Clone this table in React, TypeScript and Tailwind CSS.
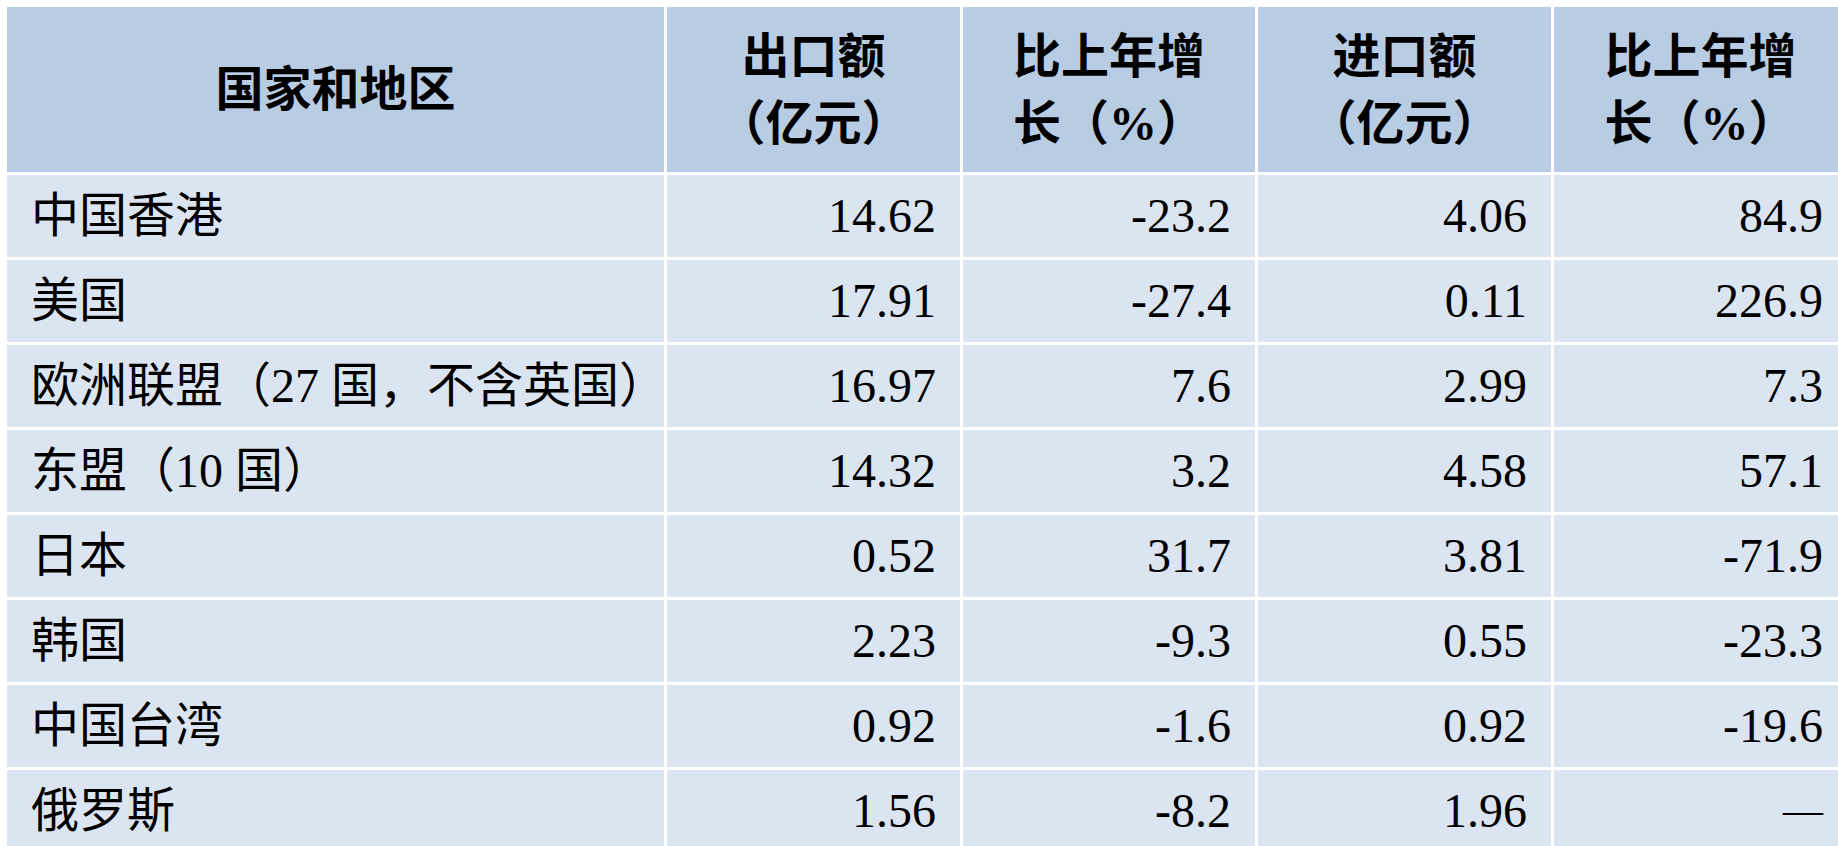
const rows: [string, string, string, string, string][] = [
  ["中国香港", "14.62", "-23.2", "4.06", "84.9"],
  ["美国", "17.91", "-27.4", "0.11", "226.9"],
  ["欧洲联盟（27 国，不含英国）", "16.97", "7.6", "2.99", "7.3"],
  ["东盟（10 国）", "14.32", "3.2", "4.58", "57.1"],
  ["日本", "0.52", "31.7", "3.81", "-71.9"],
  ["韩国", "2.23", "-9.3", "0.55", "-23.3"],
  ["中国台湾", "0.92", "-1.6", "0.92", "-19.6"],
  ["俄罗斯", "1.56", "-8.2", "1.96", "—"],
];

const font = "font-['Liberation_Serif','Noto_Sans_CJK_SC',serif]";
const head = "bg-[#b8cce4] text-center align-middle font-bold leading-[67px] p-0";

export default function App() {
  return (
    <div className="w-[1838px] h-[846px] overflow-hidden bg-white p-[4px]">
      <table className={`${font} border-separate border-spacing-[3px] text-[48px] text-black w-max`}>
        <thead>
          <tr className="h-[165px]">
            <th className={`${head} w-[657px]`}>国家和地区</th>
            <th className={`${head} w-[293px]`}>
              出口额
              <br />
              （亿元）
            </th>
            <th className={`${head} w-[292px]`}>
              比上年增
              <br />
              长（%）
            </th>
            <th className={`${head} w-[293px]`}>
              进口额
              <br />
              （亿元）
            </th>
            <th className={`${head} w-[293px]`}>
              比上年增
              <br />
              长（%）
            </th>
          </tr>
        </thead>
        <tbody>
          {rows.map((r) => (
            <tr key={r[0]} className="h-[82px]">
              <td className="bg-[#dbe5f1] pl-[24px] pr-0 py-0 align-middle leading-none">
                <div className="w-[560px] whitespace-nowrap">{r[0]}</div>
              </td>
              {r.slice(1).map((v, i) => (
                <td key={i} className="bg-[#dbe5f1] pr-[24px] pl-0 py-0 text-right align-middle leading-none">
                  {v === "—" ? <span className="text-[40px] align-[4px]">{v}</span> : v}
                </td>
              ))}
            </tr>
          ))}
        </tbody>
      </table>
    </div>
  );
}
